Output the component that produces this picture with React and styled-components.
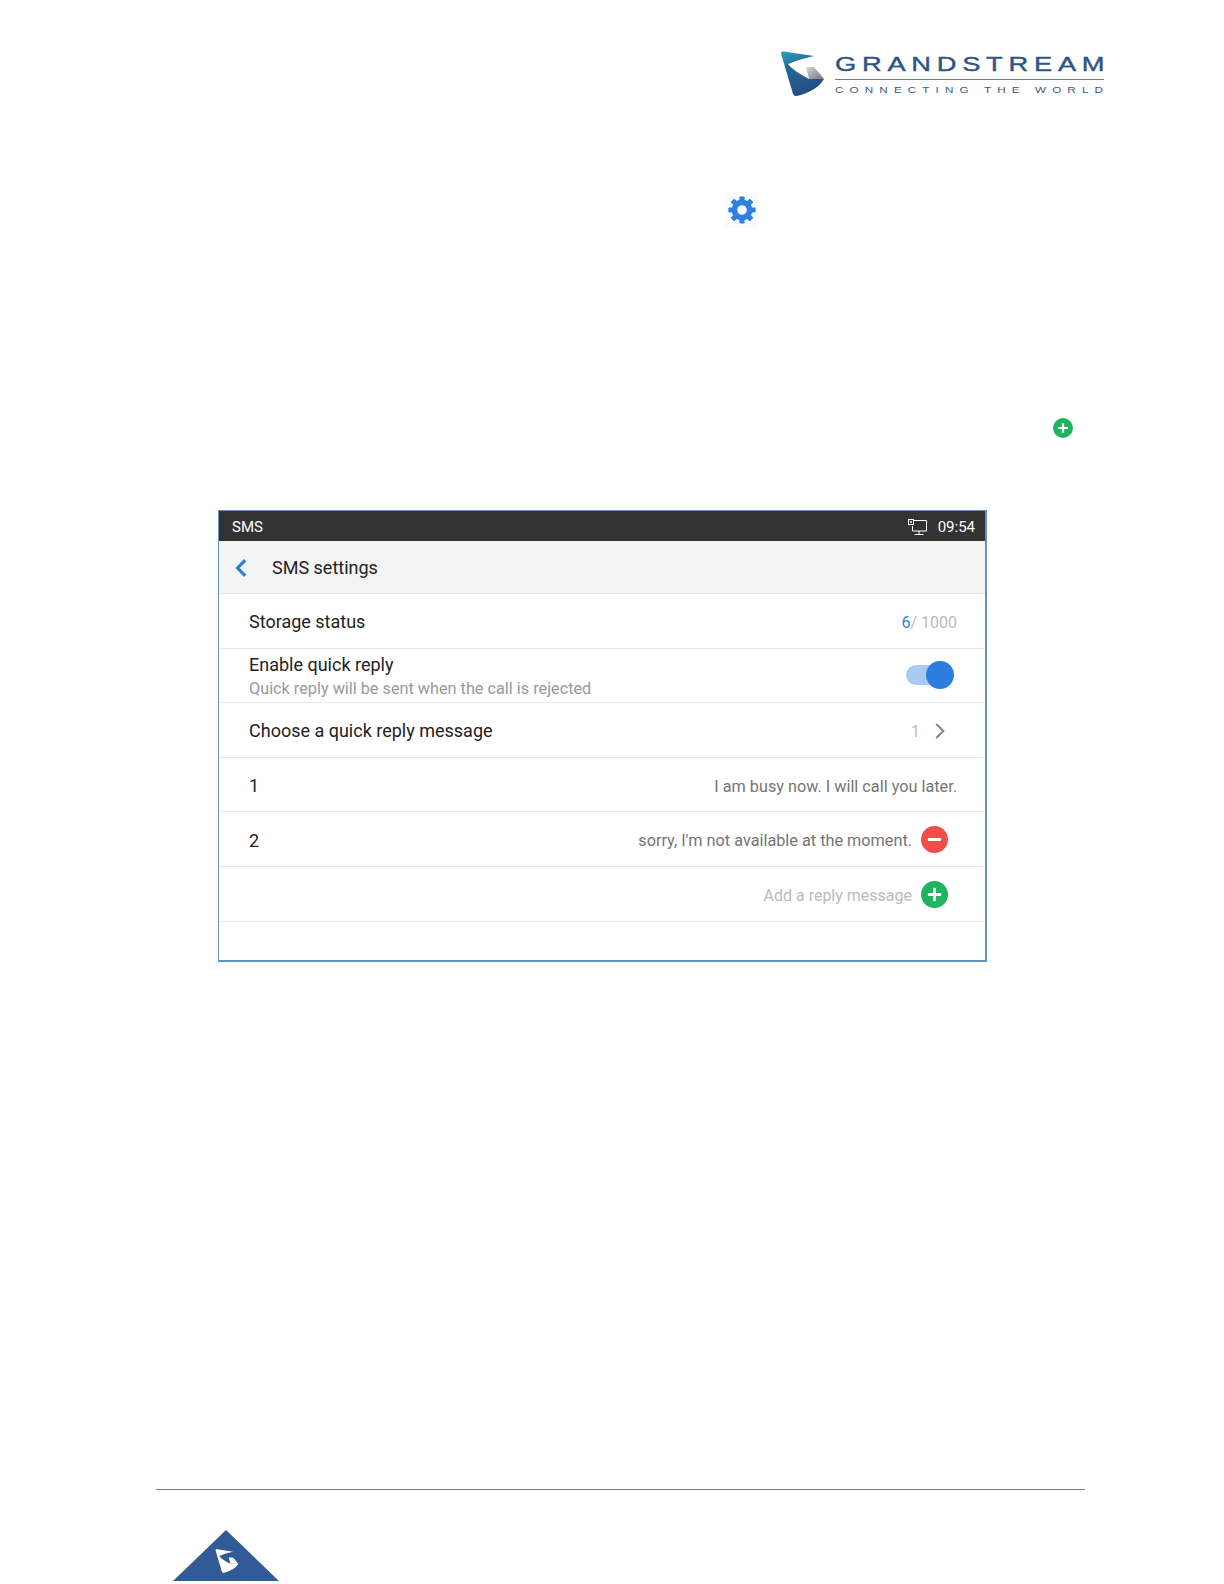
import React from 'react'
import styled, {createGlobalStyle} from 'styled-components';

const SWOOSH = 'M1 2.5 Q0.5 0 4 0.6 L34 5 Q20 8 8 13 Q12 19 29 28 L44 28 Q37 40 17 45 Q14 45.5 13 43 Z';
const SWOOSH_WEDGE = 'M26 16 L34 16 L44 28 L29 28 Z';

const GEAR_TEETH = [0, 45, 90, 135, 180, 225, 270, 315];

const LogoMark = () => (
    <svg width="44" height="46" viewBox="0 0 44 46">
        <defs>
            <linearGradient id="swooshFill" x1="0.2" y1="0" x2="0.5" y2="1">
                <stop offset="0" stopColor="#2d9dbc"/>
                <stop offset="0.3" stopColor="#25689a"/>
                <stop offset="1" stopColor="#234c80"/>
            </linearGradient>
            <linearGradient id="wedgeFill" x1="0" y1="0" x2="1" y2="1">
                <stop offset="0" stopColor="#d8d8d8"/>
                <stop offset="1" stopColor="#6f7278"/>
            </linearGradient>
        </defs>
        <path d={SWOOSH} fill="url(#swooshFill)"/>
        <path d={SWOOSH_WEDGE} fill="url(#wedgeFill)"/>
    </svg>
);

const GearIcon = () => (
    <svg width="30" height="30" viewBox="0 0 30 30">
        <circle cx="15" cy="15" r="7.6" fill="none" stroke="#2f80e0" strokeWidth="5.6"/>
        {GEAR_TEETH.map(angle => (
            <rect key={angle} x="12.4" y="1.4" width="5.2" height="5" rx="1" fill="#2f80e0"
                  transform={`rotate(${angle} 15 15)`}/>
        ))}
    </svg>
);

const RoundIcon = ({size, color, plus}) => {
    const bar = size * 0.5;
    const thick = size * 0.11;
    const mid = size / 2;
    return (
        <svg width={size} height={size} viewBox={`0 0 ${size} ${size}`}>
            <circle cx={mid} cy={mid} r={mid} fill={color}/>
            <rect x={mid - bar / 2} y={mid - thick / 2} width={bar} height={thick} rx={thick / 3} fill="#fff"/>
            {plus && <rect x={mid - thick / 2} y={mid - bar / 2} width={thick} height={bar} rx={thick / 3} fill="#fff"/>}
        </svg>
    );
};

const MonitorIcon = () => (
    <svg width="19" height="17" viewBox="0 0 19 17" fill="none" stroke="#fff" strokeWidth="1">
        <path d="M6 1.5 H18.5 V12 H4.5 V7"/>
        <rect x="0.5" y="0.5" width="5" height="5" fill="#333"/>
        <path d="M2 3 H4 M3 2 V4"/>
        <path d="M11 12 V15 M6.5 15.5 H15.5"/>
    </svg>
);

const BackIcon = () => (
    <svg width="12" height="18" viewBox="0 0 12 18" fill="none">
        <path d="M10.2 1.2 L2.6 9 L10.2 16.8" stroke="#2f7fd6" strokeWidth="3.2"/>
    </svg>
);

const ChevronIcon = () => (
    <svg width="10" height="16" viewBox="0 0 10 16" fill="none">
        <path d="M1.2 1 L8.4 8 L1.2 15" stroke="#858585" strokeWidth="2"/>
    </svg>
);

const FooterMark = () => (
    <svg width="106" height="51" viewBox="0 0 106 51">
        <path d="M53 0 L106 51 L0 51 Z" fill="#315b96"/>
        <g transform="translate(42 19) scale(0.53)">
            <path d={SWOOSH} fill="#fff"/>
            <path d={SWOOSH_WEDGE} fill="#fff"/>
        </g>
    </svg>
);

const App = () => {
    return (
        <Page>
            <GlobalStyle/>
            <LogoBar>
                <LogoMark/>
                <LogoText>
                    <LogoName>GRANDSTREAM</LogoName>
                    <LogoRule/>
                    <LogoTagline>CONNECTING THE WORLD</LogoTagline>
                </LogoText>
            </LogoBar>
            <GearRow>
                <GearTile><GearIcon/></GearTile>
            </GearRow>
            <PlusRow>
                <RoundIcon size={20} color="#1fb45f" plus/>
            </PlusRow>
            <Frame>
                <StatusBar>
                    <StatusLabel>SMS</StatusLabel>
                    <StatusRight>
                        <MonitorIcon/>
                        <StatusLabel>09:54</StatusLabel>
                    </StatusRight>
                </StatusBar>
                <TitleBar>
                    <BackIcon/>
                    <Title>SMS settings</Title>
                </TitleBar>
                <Row>
                    <RowLabel>Storage status</RowLabel>
                    <RowValue $muted>
                        <span><Accent>6</Accent>/ 1000</span>
                    </RowValue>
                </Row>
                <Row>
                    <div>
                        <RowLabel>Enable quick reply</RowLabel>
                        <RowHint>Quick reply will be sent when the call is rejected</RowHint>
                    </div>
                    <Toggle><ToggleThumb/></Toggle>
                </Row>
                <Row $right={40}>
                    <RowLabel>Choose a quick reply message</RowLabel>
                    <RowValue $muted $gap={15}>
                        1
                        <ChevronIcon/>
                    </RowValue>
                </Row>
                <Row>
                    <RowLabel>1</RowLabel>
                    <RowValue>I am busy now. I will call you later.</RowValue>
                </Row>
                <Row $right={37}>
                    <RowLabel>2</RowLabel>
                    <RowValue>
                        sorry, I'm not available at the moment.
                        <ActionIcon><RoundIcon size={27} color="#ef4f48"/></ActionIcon>
                    </RowValue>
                </Row>
                <Row $right={37}>
                    <span/>
                    <RowValue $muted>
                        Add a reply message
                        <ActionIcon><RoundIcon size={27} color="#1fb45f" plus/></ActionIcon>
                    </RowValue>
                </Row>
            </Frame>
            <Footer>
                <FooterRule/>
                <FooterMark/>
            </Footer>
        </Page>
    )
}

const GlobalStyle = createGlobalStyle`
  html, body {
    margin: 0;
    padding: 0;
    background: #fff;
  }

  * {
    box-sizing: border-box;
  }
`;

const Page = styled.div`
  display: flex;
  flex-direction: column;
  width: 1224px;
  height: 1584px;
  overflow: hidden;
  background: #fff;
  font-family: Roboto, "Liberation Sans", sans-serif;
`;

const LogoBar = styled.header`
  display: flex;
  gap: 11px;
  height: 46px;
  margin: 51px 0 0 780px;
`;

const LogoText = styled.div`
  width: 269px;
  padding-top: 1px;
  font-family: "Liberation Sans", sans-serif;
`;

const LogoName = styled.div`
  font-size: 21px;
  line-height: 24px;
  letter-spacing: 4.4px;
  color: #2f5486;
  white-space: nowrap;
  -webkit-text-stroke: 0.4px #2f5486;
  transform: scaleX(1.3);
  transform-origin: left center;
`;

const LogoRule = styled.div`
  height: 1px;
  margin-top: 3px;
  background: #5f7fa8;
`;

const LogoTagline = styled.div`
  margin-top: 5px;
  font-size: 9px;
  line-height: 10px;
  letter-spacing: 4.7px;
  color: #3f5a7c;
  white-space: nowrap;
  transform: scaleX(1.3);
  transform-origin: left center;
`;

const GearRow = styled.div`
  display: flex;
  margin: 95px 0 0 726px;
`;

const GearTile = styled.div`
  display: flex;
  align-items: center;
  justify-content: center;
  width: 32px;
  height: 36px;
  background: #f8fafc;
`;

const PlusRow = styled.div`
  display: flex;
  margin: 190px 0 0 1053px;
`;

const Frame = styled.section`
  width: 769px;
  height: 452px;
  margin: 72px 0 0 218px;
  border: 1px solid #6593bb;
  border-width: 1px 2px 2px 1px;
`;

const StatusBar = styled.div`
  display: flex;
  align-items: center;
  justify-content: space-between;
  height: 30px;
  padding: 2px 10px 0 13px;
  background: #333;
`;

const StatusRight = styled.div`
  display: flex;
  align-items: center;
  gap: 11px;
`;

const StatusLabel = styled.span`
  font-size: 15px;
  color: #fff;
`;

const TitleBar = styled.div`
  display: flex;
  align-items: center;
  height: 53px;
  padding: 1px 0 0 16px;
  background: #f4f4f4;
  border-bottom: 1px solid #e3e4e5;
`;

const Title = styled.div`
  margin-left: 25px;
  font-size: 18px;
  color: #222;
`;

const Row = styled.div`
  display: flex;
  align-items: center;
  justify-content: space-between;
  height: 54.6px;
  padding: 3px ${props => props.$right || 28}px 0 30px;
  border-bottom: 1px solid #e6e8ea;
`;

const RowLabel = styled.div`
  font-size: 18px;
  line-height: 24px;
  color: #222;
`;

const RowHint = styled.div`
  font-size: 16.25px;
  line-height: 23px;
  color: #9a9a9a;
`;

const RowValue = styled.div`
  display: flex;
  align-items: center;
  gap: ${props => props.$gap || 9}px;
  font-size: ${props => props.$muted ? 16 : 16.25}px;
  white-space: pre;
  color: ${props => props.$muted ? '#bbb' : '#757575'};
`;

const ActionIcon = styled.span`
  display: flex;
  margin-top: -2px;
`;

const Accent = styled.span`
  color: #2f7fd6;
`;

const Toggle = styled.div`
  position: relative;
  width: 44px;
  height: 20px;
  margin: 0 7px 4px 0;
  border-radius: 10px;
  background: #a9cbf3;
`;

const ToggleThumb = styled.div`
  position: absolute;
  top: -4px;
  right: -4px;
  width: 28px;
  height: 28px;
  border-radius: 50%;
  background: #2c7de0;
`;

const Footer = styled.footer`
  display: flex;
  flex-direction: column;
  align-items: flex-start;
  gap: 40px;
  margin-top: auto;
  padding: 0 0 3px 173px;
`;

const FooterRule = styled.div`
  width: 929px;
  height: 1px;
  margin-left: -17px;
  background: #808080;
`;

export default App;
